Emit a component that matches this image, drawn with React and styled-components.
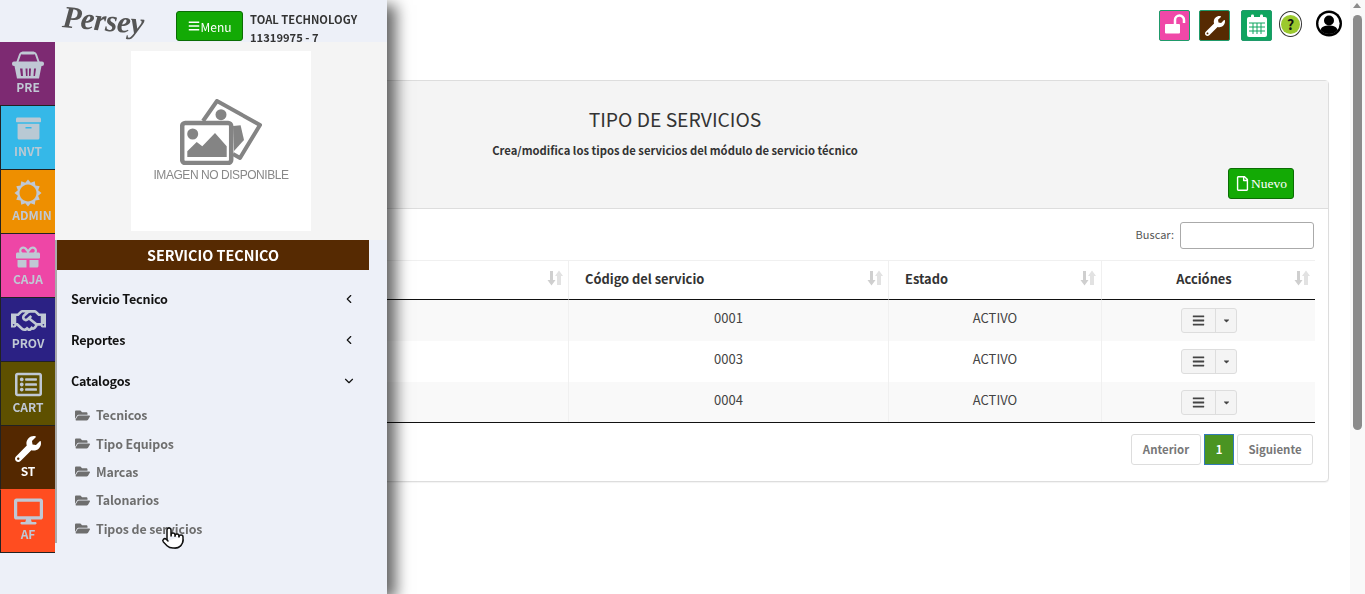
import React from 'react';
import styled, { createGlobalStyle } from 'styled-components';
import {
  FaBars,
  FaArchive,
  FaGift,
  FaRegHandshake,
  FaRegListAlt,
  FaWrench,
  FaDesktop,
  FaFolderOpen,
  FaRegFile,
  FaCaretDown,
} from 'react-icons/fa';
import { ChevronLeft, ChevronDown, Pointer } from 'lucide-react';

const FONT = '"Noto Sans CJK SC", "Noto Sans", sans-serif';

const GlobalStyle = createGlobalStyle`
  html, body {
    margin: 0;
    height: 100%;
    overflow: hidden;
    background: #fff;
  }
  body {
    font-family: ${FONT};
    font-size: 13px;
    color: #333;
  }
`;

const Page = styled.div`
  padding: 0 36px 0 21px;
`;

const TopBar = styled.div`
  height: 80px;
  margin-right: -13px;
  padding-top: 10px;
  box-sizing: border-box;
  display: flex;
  justify-content: flex-end;
  align-items: flex-start;
`;

const SquareIcon = styled.div`
  width: 31px;
  height: 31px;
  box-sizing: border-box;
  margin-right: ${(p) => p.$gap}px;
  border: 1px solid #1f9a6a;
  border-radius: 2px;
  background: ${(p) => p.$bg};
  color: #fff;
  font-size: 20px;
  display: flex;
  align-items: center;
  justify-content: center;
`;

const HelpRing = styled.div`
  width: 23px;
  height: 26px;
  margin: 1px 14px 0 0;
  box-sizing: border-box;
  border: 1px solid #333;
  border-radius: 50%;
  background: #fff;
  display: flex;
  align-items: center;
  justify-content: center;
`;

const HelpDot = styled.div`
  width: 19px;
  height: 19px;
  border-radius: 50%;
  background: #9bc92e;
  color: #111;
  font-size: 14px;
  font-weight: 700;
  line-height: 19px;
  text-align: center;
`;

const Card = styled.section`
  border: 1px solid #ddd;
  border-radius: 4px;
  box-shadow: 0 1px 1px rgba(0, 0, 0, 0.05);
  background: #fff;
`;

const CardHead = styled.header`
  height: 128px;
  box-sizing: border-box;
  padding: 25px 34px 0 0;
  background: #f4f4f4;
  border-bottom: 1px solid #ddd;
  text-align: center;
`;

const Title = styled.h3`
  margin: 0;
  font-size: 19.3px;
  font-weight: 400;
  line-height: 26px;
  color: #333;
  padding-left: 34px;
`;

const Subtitle = styled.p`
  margin: 8px 0 0;
  font-size: 11.25px;
  font-weight: 700;
  line-height: 20px;
  color: #333;
  padding-left: 34px;
`;

const HeadActions = styled.div`
  margin-top: 8px;
  display: flex;
  justify-content: flex-end;
`;

const GreenButton = styled.button`
  height: ${(p) => p.$h}px;
  width: ${(p) => p.$w}px;
  padding: 0;
  box-sizing: border-box;
  border: 1px solid #0b6d04;
  border-radius: 3px;
  background: #13aa05;
  color: #fff;
  font-family: ${(p) => p.$font};
  font-size: ${(p) => p.$size}px;
  display: flex;
  align-items: center;
  justify-content: center;
  gap: 1px;
`;

const CardBody = styled.div`
  padding: 13px 13px 16px 12px;
`;

const SearchRow = styled.div`
  display: flex;
  justify-content: flex-end;
  align-items: center;
  gap: 6px;
  height: 27px;
  margin: 0 1px 11px 0;
  font-size: 11px;
  color: #555;
`;

const SearchLabel = styled.label`
  padding-bottom: 3px;
`;

const SearchInput = styled.input`
  width: 134px;
  height: 27px;
  box-sizing: border-box;
  border: 1px solid #aaa;
  border-radius: 3px;
  background: #fff;
`;

const Table = styled.table`
  width: 1281px;
  table-layout: fixed;
  border-collapse: separate;
  border-spacing: 0;
  border-top: 1px solid #f0f0f0;
  border-bottom: 1px solid #111;
`;

const Th = styled.th`
  width: ${(p) => p.$w}px;
  height: 39px;
  padding: 0 5px 4px ${(p) => p.$pad}px;
  box-sizing: border-box;
  border-left: 1px solid #f0f0f0;
  border-bottom: 1px solid #111;
  font-size: 12.85px;
  font-weight: 700;
  color: #333;
`;

const ThInner = styled.div`
  display: flex;
  align-items: center;
`;

const ThLabel = styled.span`
  flex: 1;
  text-align: ${(p) => p.$align};
`;

const Tr = styled.tr`
  height: ${(p) => p.$h}px;
  background: ${(p) => (p.$odd ? '#f9f9f9' : '#fff')};
`;

const Td = styled.td`
  padding: 0 0 ${(p) => p.$low || 0}px;
  border-left: 1px solid #f0f0f0;
  text-align: center;
  font-size: 13px;
  color: #444;
`;

const ActionGroup = styled.div`
  width: 56px;
  height: 25px;
  margin: 0 auto 0 79px;
  box-sizing: border-box;
  border: 1px solid #ddd;
  border-radius: 3px;
  background: #f4f4f4;
  display: flex;
  color: #444;
`;

const ActionMain = styled.div`
  width: 33px;
  border-right: 1px solid #ddd;
  display: flex;
  align-items: center;
  justify-content: center;
  font-size: 13px;
`;

const ActionCaret = styled.div`
  flex: 1;
  display: flex;
  align-items: center;
  justify-content: center;
  font-size: 9px;
`;

const Pagination = styled.nav`
  margin: 11px 2px 0 0;
  display: flex;
  justify-content: flex-end;
  gap: 3px;
`;

const PageLink = styled.span`
  width: ${(p) => p.$w}px;
  height: 31px;
  box-sizing: border-box;
  border: 1px solid ${(p) => (p.$active ? '#337ab7' : '#ddd')};
  border-radius: ${(p) => (p.$active ? 0 : 3)}px;
  background: ${(p) => (p.$active ? '#4a9422' : '#fff')};
  color: ${(p) => (p.$active ? '#fff' : '#777')};
  font-size: 11.4px;
  font-weight: 700;
  line-height: 29px;
  text-align: center;
`;

/* sidebar overlays the page */
const Sidebar = styled.aside`
  position: fixed;
  left: 0;
  top: 0;
  bottom: 0;
  width: 387px;
  background: #edf0f8;
  box-shadow: 9px 5px 14px rgba(0, 0, 0, 0.6);
`;

const SideHeader = styled.div`
  height: 42px;
  padding-left: 64px;
  box-sizing: border-box;
  display: flex;
`;

const Logo = styled.div`
  width: 112px;
  padding-top: 1px;
  box-sizing: border-box;
  font-family: "Liberation Serif", serif;
  font-style: italic;
  font-weight: 700;
  font-size: 31px;
  letter-spacing: -0.5px;
  line-height: 32px;
  color: #555;
  transform: rotate(5deg);
  transform-origin: left top;
`;

const SideTop = styled.div`
  padding-top: 11px;
`;

const Company = styled.div`
  margin-left: 7px;
  padding-top: 9.5px;
  font-size: 11.2px;
  font-weight: 700;
  line-height: 18px;
  color: #333;
`;

const SideBody = styled.div`
  display: flex;
  align-items: flex-start;
`;

const Rail = styled.nav`
  width: 55px;
  flex-shrink: 0;
  border-bottom: 1px solid #222;
`;

const Tile = styled.div`
  height: ${(p) => p.$h}px;
  box-sizing: border-box;
  padding-top: ${(p) => (p.$first || p.$flat ? 7 : 8)}px;
  background: ${(p) => p.$bg};
  border-left: 1px solid ${(p) => (p.$first ? p.$bg : '#222')};
  border-top: 1px solid ${(p) => (p.$first || p.$flat ? p.$bg : '#222')};
  color: ${(p) => p.$color};
  display: flex;
  flex-direction: column;
  align-items: center;
`;

const TileIcon = styled.div`
  height: 29px;
  display: flex;
  align-items: center;
  justify-content: center;
`;

const TileLabel = styled.span`
  margin-left: ${(p) => p.$nudge || 0}px;
  font-size: 12px;
  font-weight: 700;
  line-height: 16px;
`;

const Panel = styled.div`
  flex: 1;
`;

const ImageArea = styled.div`
  height: 198px;
  box-sizing: border-box;
  padding: 9px 0 0 76px;
  background: #f4f4f4;
`;

const ImageBox = styled.div`
  width: 180px;
  height: 180px;
  background: #fff;
  display: flex;
  flex-direction: column;
  align-items: center;
  justify-content: center;
`;

const ImageCaption = styled.span`
  margin-top: 3px;
  font-family: "Liberation Sans", sans-serif;
  font-size: 12px;
  letter-spacing: -0.45px;
  line-height: 15px;
  color: #888;
`;

const NavColumn = styled.div`
  height: 303px;
  border-left: 2px solid #aaa;
`;

const ModuleTitle = styled.div`
  height: 30px;
  margin-right: 18px;
  background: #562a02;
  color: #fff;
  font-size: 14.35px;
  font-weight: 700;
  line-height: 29px;
  text-align: center;
`;

const NavGroups = styled.div`
  padding-top: 8px;
`;

const NavGroup = styled.div`
  height: 41px;
  padding: 0 31px 0 14px;
  display: flex;
  align-items: center;
  justify-content: space-between;
  font-size: 12.6px;
  letter-spacing: -0.2px;
  font-weight: 700;
  color: #111;
`;

const NavSub = styled.div`
  height: 28.4px;
  padding-left: 18px;
  display: flex;
  align-items: center;
  gap: 6px;
  font-size: 12.4px;
  letter-spacing: -0.1px;
  font-weight: 700;
  color: #6e6e6e;
`;

const CursorMark = styled.div`
  position: absolute;
  left: 161px;
  top: 526px;
  color: #111;
  line-height: 0;
`;

const ScrollTrack = styled.div`
  position: fixed;
  top: 0;
  right: 0;
  bottom: 0;
  width: 15px;
  background: #f9f9f9;
`;

const ScrollArrow = styled.div`
  position: absolute;
  top: 3px;
  left: 3px;
  border-left: 4.5px solid transparent;
  border-right: 4.5px solid transparent;
  border-bottom: 5px solid #8b8b8b;
`;

const ScrollThumb = styled.div`
  position: absolute;
  top: 15px;
  left: 3px;
  width: 9px;
  height: 415px;
  border-radius: 5px;
  background: #8b8b8b;
`;

const SortIcon = () => (
  <svg width="16" height="16" viewBox="0 0 16 16" fill="#cfcfcf">
    <path d="M3 1h3v9h2.500L4.500 15.500 .5 10H3z" />
    <path d="M10 15v-9H8l4-5.500L16 6h-2v9z" fill="#e2e2e2" />
  </svg>
);

const NoImageIcon = () => (
  <svg width="82" height="66" viewBox="0 0 82 66" fill="#848484">
    <path d="M23 22 37 2 80 26 60 59 53 55" fill="none" stroke="#848484" strokeWidth="4" strokeLinejoin="round" />
    <circle cx="41" cy="15.7" r="5.5" />
    <path d="M53 27l7.600-.7L64 41 54 52z" />
    <rect x="2.200" y="24" width="49" height="40" rx="3" fill="#fff" stroke="#848484" strokeWidth="4.5" />
    <circle cx="12.7" cy="35" r="5.5" />
    <path d="M7.300 58v-5.700l9.400-9.300 5.600 4.300L35 34l11.700 13.300V58z" />
  </svg>
);

const UnlockIcon = () => (
  <svg width="29" height="29" viewBox="1 1 29 29" fill="#fff">
    <rect x="6" y="14" width="15" height="9.500" rx="1" />
    <path d="M16 14V10a4.500 4.500 0 0 1 9 0v3" fill="none" stroke="#fff" strokeWidth="2.500" />
  </svg>
);

const CalendarIcon = () => (
  <svg width="22" height="24" viewBox="0 0 22 24" fill="#fff">
    <rect x="1" y="3" width="20" height="20" rx="2" />
    <rect x="5" y="0.5" width="3" height="6" rx="1.2" />
    <rect x="14" y="0.5" width="3" height="6" rx="1.2" />
    <path d="M3 9h16M3 13h16M3 17h16M7 9v11M11 9v11M15 9v11" stroke="#0fa55f" strokeWidth="1" />
  </svg>
);

const UserIcon = () => (
  <svg width="26" height="27" viewBox="0 0 26 27">
    <circle cx="13" cy="13.5" r="13" fill="#000" />
    <circle cx="13" cy="13.5" r="10.6" fill="#fff" />
    <circle cx="13" cy="10.5" r="5" fill="#000" />
    <path d="M4.500 20c1-3.500 4.500-4.500 8.500-4.500s7.500 1 8.500 4.500c-2 2.600-5 4-8.500 4s-6.500-1.400-8.500-4z" fill="#000" />
  </svg>
);

const BasketIcon = () => (
  <svg width="32" height="28" viewBox="0 0 32 28" fill="currentColor">
    <path d="M5 12 8 3.500Q8.500 2 10 2H22Q23.500 2 24 3.500L27 12" fill="none" stroke="currentColor" strokeWidth="2" />
    <rect x="9" y="0.5" width="14" height="3" rx="1.500" />
    <rect x="0" y="10.500" width="32" height="4.500" rx="2" />
    <path
      fillRule="evenodd"
      d="M2.500 15H29.500L27 27.500H5ZM8 17.500 9 25H11L10.500 17.500ZM13.500 17.500 14 25H15.500V17.500ZM17 17.500V25H18.500L19 17.500ZM22 17.500 21.500 25H23L24 17.500Z"
    />
  </svg>
);

// twelve pointed ring, the sun used on the ADMIN tile
const sunPath = () => {
  const points = [];
  for (let i = 0; i < 24; i += 1) {
    const r = i % 2 === 0 ? 13.5 : 10.5;
    const a = (i * Math.PI) / 12;
    points.push(`${(14 + r * Math.sin(a)).toFixed(2)} ${(14 - r * Math.cos(a)).toFixed(2)}`);
  }
  return `M${points.join('L')}ZM14 5.500a8.500 8.500 0 1 0 .01 0Z`;
};

const SunIcon = () => (
  <svg width="28" height="28" viewBox="0 0 28 28" fill="currentColor">
    <path fillRule="evenodd" d={sunPath()} />
  </svg>
);

const modules = [
  { key: 'PRE', bg: '#7d2a72', color: '#c0c8d4', icon: <BasketIcon />, h: 63 },
  { key: 'INVT', bg: '#35b8e8', color: '#b9c9d4', icon: <FaArchive size={25} />, h: 64 },
  { key: 'ADMIN', bg: '#ee8f00', color: '#c0c8d4', icon: <SunIcon />, h: 64, nudge: 8 },
  { key: 'CAJA', bg: '#ee46a6', color: '#c0c8d4', icon: <FaGift size={24} />, h: 64 },
  { key: 'PROV', bg: '#2b2184', color: '#c0c8d4', icon: <FaRegHandshake size={35} />, h: 64 },
  { key: 'CART', bg: '#5e5000', color: '#c0c8d4', icon: <FaRegListAlt size={27} />, h: 64 },
  { key: 'ST', bg: '#542800', color: '#fff', icon: <FaWrench size={26} />, h: 64 },
  { key: 'AF', bg: '#ff4d20', color: '#c0c8d4', icon: <FaDesktop size={29} />, h: 63, flat: true },
];

const rows = [
  { code: '0001', h: 41, odd: true },
  { code: '0003', h: 41, odd: false },
  { code: '0004', h: 40, odd: true },
];

const subItems = ['Tecnicos', 'Tipo Equipos', 'Marcas', 'Talonarios', 'Tipos de servicios'];

const App = () => (
  <>
    <GlobalStyle />
    <Page>
      <TopBar>
        <SquareIcon $bg="#f048a8" $gap={9}><UnlockIcon /></SquareIcon>
        <SquareIcon $bg="#562a02" $gap={11}><FaWrench /></SquareIcon>
        <SquareIcon $bg="#0fa55f" $gap={7}><CalendarIcon /></SquareIcon>
        <HelpRing><HelpDot>?</HelpDot></HelpRing>
        <UserIcon />
      </TopBar>
      <Card>
        <CardHead>
          <Title>TIPO DE SERVICIOS</Title>
          <Subtitle>Crea/modifica los tipos de servicios del módulo de servicio técnico</Subtitle>
          <HeadActions>
            <GreenButton $w={66} $h={31} $size={13.5} $font='"Liberation Serif", serif'>
              <FaRegFile size={15} /> Nuevo
            </GreenButton>
          </HeadActions>
        </CardHead>
        <CardBody>
          <SearchRow>
            <SearchLabel>Buscar:</SearchLabel>
            <SearchInput />
          </SearchRow>
          <Table>
            <thead>
              <tr>
                <Th $w={534} $pad={16}><ThInner><ThLabel $align="left" /><SortIcon /></ThInner></Th>
                <Th $w={320} $pad={16}><ThInner><ThLabel $align="left">Código del servicio</ThLabel><SortIcon /></ThInner></Th>
                <Th $w={213} $pad={16}><ThInner><ThLabel $align="left">Estado</ThLabel><SortIcon /></ThInner></Th>
                <Th $w={214} $pad={12}><ThInner><ThLabel $align="center">Acciónes</ThLabel><SortIcon /></ThInner></Th>
              </tr>
            </thead>
            <tbody>
              {rows.map((row) => (
                <Tr key={row.code} $h={row.h} $odd={row.odd}>
                  <Td />
                  <Td $low={6}>{row.code}</Td>
                  <Td $low={6}>ACTIVO</Td>
                  <Td>
                    <ActionGroup>
                      <ActionMain><FaBars /></ActionMain>
                      <ActionCaret><FaCaretDown /></ActionCaret>
                    </ActionGroup>
                  </Td>
                </Tr>
              ))}
            </tbody>
          </Table>
          <Pagination>
            <PageLink $w={70}>Anterior</PageLink>
            <PageLink $w={30} $active>1</PageLink>
            <PageLink $w={76}>Siguiente</PageLink>
          </Pagination>
        </CardBody>
      </Card>
    </Page>

    <Sidebar>
      <SideHeader>
        <Logo>Persey</Logo>
        <SideTop>
          <GreenButton $w={67} $h={30} $size={12} $font={FONT}>
            <FaBars size={12} /> Menu
          </GreenButton>
        </SideTop>
        <Company>
          TOAL TECHNOLOGY
          <br />
          11319975 - 7
        </Company>
      </SideHeader>
      <SideBody>
        <Rail>
          {modules.map(({ key, bg, color, icon, h, nudge, flat }, i) => (
            <Tile key={key} $bg={bg} $color={color} $h={h} $first={i === 0} $flat={flat}>
              <TileIcon>{icon}</TileIcon>
              <TileLabel $nudge={nudge}>{key}</TileLabel>
            </Tile>
          ))}
        </Rail>
        <Panel>
          <ImageArea>
            <ImageBox>
              <NoImageIcon />
              <ImageCaption>IMAGEN NO DISPONIBLE</ImageCaption>
            </ImageBox>
          </ImageArea>
          <NavColumn>
            <ModuleTitle>SERVICIO TECNICO</ModuleTitle>
            <NavGroups>
              <NavGroup>Servicio Tecnico <ChevronLeft size={14} /></NavGroup>
              <NavGroup>Reportes <ChevronLeft size={14} /></NavGroup>
              <NavGroup>Catalogos <ChevronDown size={14} /></NavGroup>
              {subItems.map((item) => (
                <NavSub key={item}>
                  <FaFolderOpen size={15} />
                  {item}
                </NavSub>
              ))}
            </NavGroups>
          </NavColumn>
        </Panel>
      </SideBody>
      <CursorMark>
        <Pointer size={24} fill="#fff" strokeWidth={1.5} />
      </CursorMark>
    </Sidebar>

    <ScrollTrack>
      <ScrollArrow />
      <ScrollThumb />
    </ScrollTrack>
  </>
);

export default App;
